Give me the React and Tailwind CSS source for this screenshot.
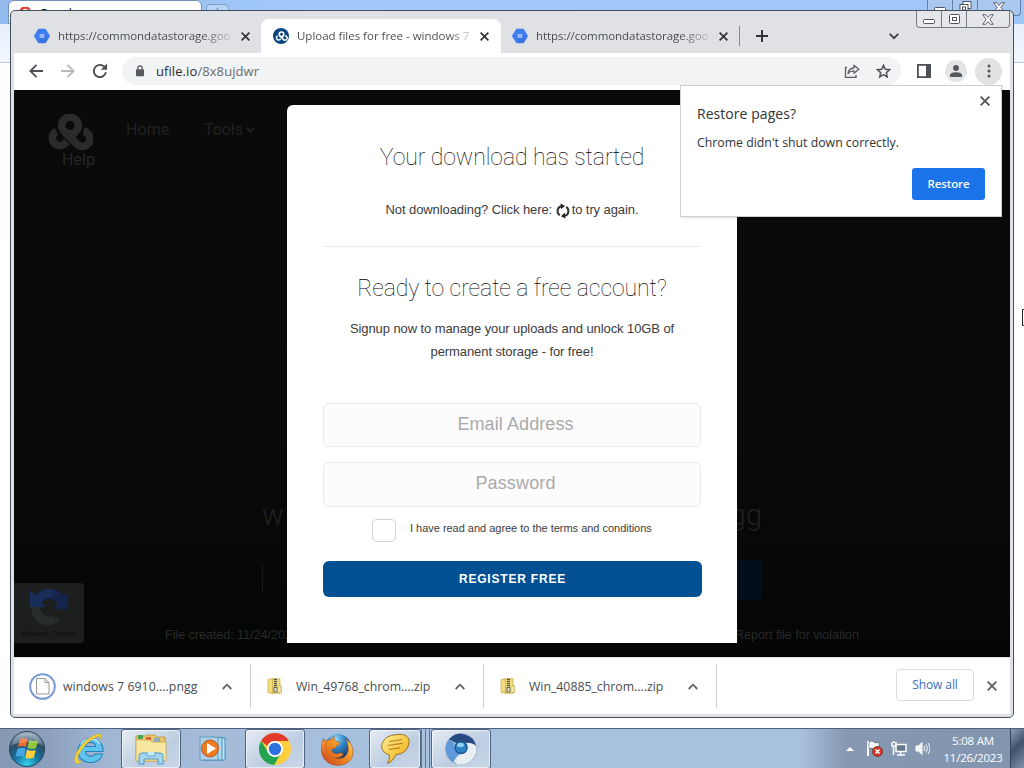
import React from "react";

const ui = "font-['Open_Sans','Noto_Sans',sans-serif]";

function Close({ className = "" }) {
  return (
    <svg className={"block shrink-0 " + className} width="9" height="9" viewBox="0 0 9 9" fill="none" stroke="currentColor" strokeWidth="1.7">
      <path d="M.6.6l7.8 7.8M8.4.6L.6 8.4" />
    </svg>
  );
}

function StorageIcon() {
  return (
    <svg className="block shrink-0" width="16" height="16" viewBox="0 0 16 16">
      <path d="M4.6 1h6.8L15.8 8l-4.400 7H4.600L.2 8z" fill="#3f7ef0" stroke="#3f7ef0" strokeWidth=".6" strokeLinejoin="round" />
      <path d="M10.8 6l4 4-3.400 5H7.600L5.200 10z" fill="#3568d4" opacity=".5" />
      <rect x="5.7" y="6.1" width="4.6" height="3.8" fill="#b9d0ff" />
      <path d="M6 7.2h4M6 8.9h4" stroke="#6b9bf5" strokeWidth=".7" />
    </svg>
  );
}

function Knot({ size, width }) {
  return (
    <svg className="block" width={size} height={(size * 36) / 46} viewBox="0 0 46 36" fill="none" stroke="currentColor" strokeWidth={width}>
      <path d="M9.500 17.300A7.600 7.600 0 1 0 17 30.500l3-3" />
      <path d="M16.500 17L30 30.200A7.600 7.600 0 1 0 36.500 17.300" />
      <circle cx="23" cy="11.500" r="8.300" />
      <path d="M29 17.500l-7 7" />
    </svg>
  );
}

function TabStrip() {
  return (
    <div className="flex h-[42px] items-end pt-2 text-[11.500px] text-[#45484c]">
      <div className="flex h-[34px] w-[247px] items-center pl-5">
        <StorageIcon />
        <span className="ml-2 w-[174px] whitespace-nowrap bg-[linear-gradient(90deg,#45484c_83%,#c8cacd)] bg-clip-text tracking-[-0.06px] text-transparent">https://commondatastorage.goo</span>
        <Close className="ml-[9px] text-[#333]" />
      </div>
      <div className="flex h-[34px] w-[240px] items-center rounded-t-[8px] bg-white pl-3">
        <span className="flex size-4 shrink-0 items-center justify-center rounded-full bg-[#0c4682] text-white"><Knot size={13} width={5.5} /></span>
        <span className="ml-2 w-[172px] whitespace-nowrap bg-[linear-gradient(90deg,#45484c_88%,#ccc)] bg-clip-text tracking-[-0.01px] text-transparent">Upload files for free - windows 7</span>
        <Close className="ml-[11px] text-[#333]" />
      </div>
      <div className="flex h-[34px] w-[238px] items-center pl-[11px]">
        <StorageIcon />
        <span className="ml-2 w-[174px] whitespace-nowrap bg-[linear-gradient(90deg,#45484c_83%,#c8cacd)] bg-clip-text tracking-[-0.06px] text-transparent">https://commondatastorage.goo</span>
        <Close className="ml-[9px] text-[#333]" />
      </div>
      <div className="flex h-[34px] items-center">
        <span className="h-5 w-px bg-[#85878a]" />
        <svg className="ml-4 block" width="12" height="12" viewBox="0 0 12 12" stroke="#333" strokeWidth="2"><path d="M6 0v12M0 6h12" /></svg>
        <svg className="ml-[121px] block" width="10" height="7" viewBox="0 0 10 7" fill="none" stroke="#444" strokeWidth="1.900"><path d="M.7.900L5 5.200 9.300.900" /></svg>
      </div>
    </div>
  );
}

function Toolbar() {
  return (
    <div className="flex h-[37px] items-center bg-white pb-px pl-[15px]">
      <svg className="block" width="14" height="14" viewBox="0 0 14 14" fill="none" stroke="#4d5054" strokeWidth="1.800"><path d="M14 7H1.500M7.500.8L1.300 7l6.200 6.200" /></svg>
      <svg className="ml-[18px] block" width="14" height="14" viewBox="0 0 14 14" fill="none" stroke="#b7b9bb" strokeWidth="1.800"><path d="M0 7h12.500M6.500.8L12.700 7l-6.200 6.200" /></svg>
      <svg className="ml-[17px] block" width="16" height="16" viewBox="0 0 16 16" fill="none" stroke="#4d5054" strokeWidth="1.900"><path d="M13.900 9.200A6.100 6.100 0 1 1 12.300 3.700L14 5.400" /><path d="M15 .6v6.200H8.800z" fill="#4d5054" stroke="none" /></svg>
      <div className="ml-[14px] flex h-7 w-[779px] items-center rounded-full bg-[#f1f3f4] pl-[14px]">
        <svg className="block" width="8" height="12" viewBox="0 0 8 12"><rect y="4.200" width="8" height="7" rx=".8" fill="#55585c" /><path d="M1.800 4.500V3a2.200 2.200 0 0 1 4.400 0v1.500" fill="none" stroke="#55585c" strokeWidth="1.300" /></svg>
        <span className="ml-3 pt-[2px] text-[13px] tracking-[0.08px] text-[#2b2c2e]">ufile.io<span className="text-[#6a6d71]">/8x8ujdwr</span></span>
        <svg className="ml-auto block" width="16" height="14" viewBox="0 0 16 14" fill="none" stroke="#5c5f63" strokeWidth="1.300"><path d="M3 3.500H1.500v9.800h10.500V11" /><path d="M4 9.500c.4-3.500 2.500-5.300 6-5.500V1.200L14.800 5.200l-4.800 4V6.800c-2.800 0-4.500.7-6 2.700z" strokeLinejoin="round" /></svg>
        <svg className="ml-4 mr-[10px] block" width="15" height="14" viewBox="0 0 15 14" fill="none" stroke="#505357" strokeWidth="1.500"><path d="M7.500 1.200l1.700 4.100 4.500.4-3.400 2.900 1 4.400-3.800-2.300L3.700 13l1-4.400L1.300 5.700l4.500-.4z" /></svg>
      </div>
      <svg className="ml-4 block" width="14" height="14" viewBox="0 0 14 14"><rect x=".9" y=".9" width="12.200" height="12.200" fill="none" stroke="#4d5054" strokeWidth="1.800" /><rect x="9" width="5" height="14" fill="#4d5054" /></svg>
      <span className="ml-[14px] flex size-[22px] items-center justify-center rounded-full bg-[#e3e4e6]">
        <svg className="block" width="12" height="12" viewBox="0 0 12 12" fill="#55585c"><circle cx="6" cy="3" r="2.900" /><path d="M0 12V9.800C0 7.900 4 7.200 6 7.200s6 .7 6 2.600V12z" /></svg>
      </span>
      <span className="ml-[8px] flex size-[27px] items-center justify-center rounded-full bg-[#e2e2e2]">
        <svg className="block" width="4" height="14" viewBox="0 0 4 14" fill="#505357"><circle cx="2" cy="2" r="1.500" /><circle cx="2" cy="7" r="1.500" /><circle cx="2" cy="12" r="1.500" /></svg>
      </span>
    </div>
  );
}

function DownloadModal() {
  return (
    <section className="absolute left-[273px] top-[15px] flex h-[538px] w-[450px] flex-col rounded-t-md bg-white px-9 text-center font-['Liberation_Sans',Arial,sans-serif] text-[#3c3c3c]">
      <h1 className="mt-[37px] h-[30px] whitespace-nowrap font-['Roboto',sans-serif] text-[23px] font-thin leading-[32px] tracking-[-0.08px] text-black">Your download has started</h1>
      <p className="mt-7 flex h-5 items-center justify-center whitespace-pre text-[13px] tracking-[-0.09px]">
        Not downloading? Click here:{" "}
        <svg className="mr-0.5 mt-[2px] block" width="14" height="16" viewBox="0 0 14 16" fill="none" stroke="#333" strokeWidth="2"><path d="M3.900 12.200A5 5 0 0 1 5 3.200M10.100 3.800A5 5 0 0 1 9 12.800" /><path d="M4.500.500L9 2.800 5.200 6.200zM9.500 15.500L5 13.200 8.800 9.800z" fill="#222" stroke="none" /></svg>
        to try again.
      </p>
      <div className="mt-[26px] h-px bg-[#e9e9e9]" />
      <h2 className="mt-[26px] h-[30px] whitespace-nowrap font-['Roboto',sans-serif] text-[23px] font-thin leading-[32px] tracking-[-0.08px] text-black">Ready to create a free account?</h2>
      <p className="mt-[14px] text-[13px] leading-[23px] tracking-[-0.09px]">Signup now to manage your uploads and unlock 10GB of<br />permanent storage - for free!</p>
      <div className="mt-[40px] h-11 shrink-0 rounded-md border border-[#ebebeb] bg-[#fcfcfc] pl-[7px] text-[18px] leading-[40px] tracking-[0.08px] text-[#aaa]">Email Address</div>
      <div className="mt-[15px] h-[45px] shrink-0 rounded-md border border-[#ebebeb] bg-[#fcfcfc] pl-[7px] text-[18px] leading-[40px] tracking-[0.15px] text-[#aaa]">Password</div>
      <div className="mt-3 flex h-6 pl-[49px]">
        <span className="h-[23px] w-6 rounded-[5px] border border-[#d2d2d2] bg-white" />
        <span className="ml-[14px] text-[11px] leading-[19px] tracking-[-0.02px]">I have read and agree to the terms and conditions</span>
      </div>
      <button className="mt-[18px] -mr-px h-9 shrink-0 rounded-[6px] bg-[#025094] text-[12px] font-bold tracking-[0.8px] text-white">REGISTER FREE</button>
    </section>
  );
}

function RestoreBubble() {
  return (
    <section className="absolute left-[669px] top-[74px] flex h-[132px] w-[322px] flex-col border border-[#cfcfcf] bg-white pl-4 pr-4 pt-[17px] text-[#303236] shadow-[1px_1px_2px_rgba(0,0,0,0.15)]">
      <Close className="absolute right-[11px] top-[10px] size-[10px] text-[#555]" />
      <h3 className="h-[22px] whitespace-nowrap text-[14px] leading-[22px] tracking-[0.05px]">Restore pages?</h3>
      <p className="mt-2 h-5 whitespace-nowrap text-[12.300px] leading-5">Chrome didn't shut down correctly.</p>
      <button className="mt-[15px] h-8 w-[73px] self-end rounded-[3px] bg-[#1a73e8] text-[11.500px] font-semibold tracking-[-0.1px] text-white">Restore</button>
    </section>
  );
}

function WebPage() {
  return (
    <main className="relative flex h-[567px] flex-col overflow-hidden bg-[linear-gradient(180deg,#0a0a0a_0%,#080a09_70%,#040505_100%)] font-['Roboto',sans-serif] text-[#212121]">
      <nav className="flex h-[90px] pl-[33px] pt-6">
        <div className="w-[79px] text-[#2b2b2b]">
          <Knot size={46} width={7.5} />
          <div className="pl-[15px] pt-px text-[16px] leading-[18px] tracking-[0.1px] text-[#272727]">Help</div>
        </div>
        <div className="w-[78px] text-[16px] leading-[31px] tracking-[0.1px]">Home</div>
        <div className="flex h-[31px] items-center gap-[3px] text-[16px] tracking-[-0.1px]">Tools<svg width="9" height="6" viewBox="0 0 9 6" fill="none" stroke="currentColor" strokeWidth="1.800"><path d="M1 1l3.500 3.500L8 1" /></svg></div>
      </nav>
      <div className="mx-auto mt-auto mb-[27px] flex w-[500px] justify-between text-[29px] font-light leading-[36px] text-[#202121]">
        <span>w</span><span>gg</span>
      </div>
      <div className="mx-auto flex h-10 w-[500px] justify-between">
        <span className="mt-1 h-7 w-px bg-[#171818]" /><span className="w-[120px] rounded bg-[#000d1a]" />
      </div>
      <div className="flex h-[57px] items-end">
        <div className="mb-[14px] flex h-[60px] w-[70px] flex-col items-center rounded-r bg-[#1d1e1e] pt-1.5">
          <svg width="40" height="38" viewBox="0 0 40 38"><path d="M2 17A18 17 0 0 1 35 7l4-4v17H24l5-5c-5-8-16-7-18 3z" fill="#14244c" /><path d="M2 17h9c0 7 6 12 13 10l7 5C16 42 2 33 2 17z" fill="#292c2d" /><path d="M1 18V1l6 6c5-6 10-7 16-7v9c-6-1-9 2-10 5l4 4z" fill="#192d59" /></svg>
          <span className="text-[8px] leading-[13px] text-[#0c0d0d]">Privacy - Terms</span>
        </div>
        <div className="mb-[13px] ml-[81px] flex w-[694px] justify-between font-['Liberation_Sans',Arial,sans-serif] text-[12.600px] leading-[18px] tracking-[-0.05px] text-[#292929]">
          <span>File created: 11/24/2023</span><span>Report file for violation</span>
        </div>
      </div>
      <DownloadModal />
    </main>
  );
}

function ZipIcon() {
  return (
    <svg className="block shrink-0" width="15" height="16" viewBox="0 0 15 16">
      <path d="M1 1.500l5-1v15l-5-1z" fill="#f1dd7d" stroke="#c8a943" strokeWidth=".7" />
      <path d="M5.500.8H13v14.500H5.500z" fill="#efdc78" stroke="#c8a943" strokeWidth=".7" />
      <path d="M12 8h2.300v6.500H12" fill="#f6ecaa" stroke="#b9983a" strokeWidth=".7" />
      <path d="M8.500.8v9" stroke="#555548" strokeWidth="3" strokeDasharray="1.200 .8" />
      <rect x="7" y="9.300" width="3" height="4.700" fill="#ddd" stroke="#555548" strokeWidth=".8" />
    </svg>
  );
}

function Download({ name, first }) {
  return (
    <div className={"flex h-11 items-center border-r border-[#ccc] " + (first ? "w-[237px] pl-[15px]" : "w-[233px] pl-4")}>
      {first ? (
        <svg className="block shrink-0" width="27" height="27" viewBox="0 0 27 27"><circle cx="13.500" cy="13.500" r="12.300" fill="#fff" stroke="#7799d3" strokeWidth="2" /><path d="M7.500 5.500h8.500l4 4v11.500H7.500z" fill="#fcfcfc" stroke="#999" /><path d="M16 5.500v4h4" fill="none" stroke="#999" /></svg>
      ) : (
        <ZipIcon />
      )}
      <span className={"whitespace-nowrap pt-[3px] text-[12.300px] text-[#4a4c50] " + (first ? "ml-[7px] w-[159px] tracking-[0.05px]" : "ml-[14px] w-[159px] tracking-[-0.01px]")}>{name}</span>
      <svg className="block" width="10" height="7" viewBox="0 0 10 7" fill="none" stroke="#606368" strokeWidth="1.800"><path d="M.7 6L5 1.700 9.300 6" /></svg>
    </div>
  );
}

function Shelf() {
  return (
    <footer className="flex h-[57px] items-center border-t border-[#e5e5e5] bg-white">
      <Download first name="windows 7 6910....pngg" />
      <Download name="Win_49768_chrom....zip" />
      <Download name="Win_40885_chrom....zip" />
      <button className="ml-auto mb-[2px] h-8 w-[78px] rounded border border-[#dadce0] text-[12px] font-medium tracking-[-0.1px] text-[#3b6ebc]">Show all</button>
      <Close className="ml-[13px] mr-[13px] mb-px size-[10px] text-[#606060]" />
    </footer>
  );
}

function Caption({ back }) {
  return (
    <div className={"absolute flex h-[17px] divide-x rounded-b-[4px] border border-t-0 " + (back ? "left-[927px] -top-px w-[94px] divide-[#647fa6] border-[#647fa6] bg-[#a8c8ef]" : "right-[3px] top-0 w-[94px] divide-[#777b83] border-[#777b83] bg-[#e4e6e9]")}>
      <div className="flex w-[25px] items-end justify-center pb-[3px]"><svg width="12" height="5" viewBox="0 0 12 5"><rect x=".5" y=".5" width="11" height="4" rx="1" fill="#fff" stroke="#50545e" /></svg></div>
      <div className="flex w-[25px] items-center justify-center">
        <svg width="13" height="12" viewBox="0 0 13 12" fill="#fff" stroke="#50545e">
          {back ? <><rect x="4" y=".5" width="8" height="7" /><rect x="1" y="3.500" width="8" height="8" /><rect x="3.500" y="6" width="3" height="3" /></> : <><rect x="1.500" y="1.500" width="10" height="9" rx="1" /><rect x="4.500" y="4.500" width="4" height="3" /></>}
        </svg>
      </div>
      <div className="flex flex-1 items-center justify-center"><svg width="12" height="11" viewBox="0 0 12 11"><path d="M.7.7h3L6 3.500 8.300.7h3L7.800 5.500l3.500 4.800h-3L6 7.500 3.700 10.300h-3l3.500-4.800z" fill="#fff" stroke="#50545e" strokeWidth=".9" /></svg></div>
    </div>
  );
}

function BackWindow() {
  return (
    <div className="flex h-[728px] flex-col bg-white">
      <div className="flex h-6 bg-[linear-gradient(90deg,#93bbee,#a1c8f8_30%,#9fc6f6)] pl-2">
        <div className="flex h-6 w-[194px] gap-2 rounded-t-md border border-[#7291b9] bg-white pl-2.5 pt-[6px]">
          <svg width="12" height="12" viewBox="0 0 12 12" fill="none" stroke="#e23d35" strokeWidth="2.500"><path d="M10.500 3A5 5 0 1 0 11 7H6" /></svg>
          <span className="font-['Open_Sans',sans-serif] text-[12px] leading-[13px] text-black">Google</span>
        </div>
        <span className="ml-1 mt-1 flex h-4 w-[23px] justify-center rounded border border-[#7d9fcb] bg-[#b8d4f6] text-[12px] leading-[12px] text-[#50617b]">+</span>
      </div>
      <div className="h-[39px] border-b border-[#b7c8dd] bg-[linear-gradient(180deg,#e5effb,#f3f7fc)]" />
    </div>
  );
}

function TaskButton({ children, className }) {
  return <div className={"flex h-10 items-center justify-center rounded-[3px] border border-[#50627c] bg-[linear-gradient(145deg,#e5ebf3,#bdcde1_60%,#c9d7e8)] shadow-[inset_0_0_0_1px_rgba(255,255,255,0.6)] " + className}>{children}</div>;
}

function StartOrb() {
  return (
    <svg width="38" height="38" viewBox="0 0 38 38">
      <defs><radialGradient id="orb" cx=".5" cy=".95" r=".95"><stop offset="0" stopColor="#35d6ef" /><stop offset=".4" stopColor="#14719d" /><stop offset=".7" stopColor="#2b4e66" /><stop offset="1" stopColor="#a9bdca" /></radialGradient></defs>
      <circle cx="19" cy="19" r="17.500" fill="url(#orb)" stroke="#28415b" />
      <path d="M12 9q4-2 7.500.2L18 17q-4.300-2.200-8.200 0z" fill="#ee6a2c" />
      <path d="M21 10q4 2.200 9 .2l-2 8q-4.500 1.800-8.500-.4z" fill="#91c63f" />
      <path d="M9.400 19q4-2.200 8.200-.2L16 27q-4.300-2.200-8.500.2z" fill="#47a6e5" />
      <path d="M19 19.600q4.300 2.200 8.800.4l-2 7.800q-4.500 1.800-8.500-.4z" fill="#fbd03a" />
      <path d="M4 15A15.500 15.500 0 0 1 34 15Q19 9 4 15" fill="#fff" opacity=".22" />
    </svg>
  );
}

function Explorer() {
  return (
    <svg width="34" height="32" viewBox="0 0 34 32">
      <path d="M2 3h9l2-1h8l1 2h9v24H2z" fill="#e9c965" stroke="#b9943c" strokeWidth=".8" />
      <path d="M4 2h5v4H4z" fill="#47a54f" /><path d="M12 4h5v4h-5z" fill="#d75c3d" /><path d="M20 5h6v4h-6z" fill="#85aaca" />
      <path d="M2 7h14l2 2h14v19H2z" fill="#f7e7a0" stroke="#c9a94f" strokeWidth=".8" />
      <path d="M5 31V23q0-3 3-3h18q3 0 3 3v8h-5v-5H10v5z" fill="#a6d6f2" stroke="#4e96c5" />
      <path d="M13 19v4h8v-4" fill="#c5eafa" stroke="#65a9d1" />
    </svg>
  );
}

function Firefox() {
  return (
    <svg width="34" height="34" viewBox="0 0 34 34">
      <defs>
        <radialGradient id="globe" cx=".4" cy=".2" r=".8"><stop offset="0" stopColor="#9bdcf6" /><stop offset=".45" stopColor="#2f86c4" /><stop offset="1" stopColor="#12305f" /></radialGradient>
        <linearGradient id="tail" x1="1" y1="0" x2="0" y2="1"><stop offset="0" stopColor="#fde26a" /><stop offset=".4" stopColor="#f39a2b" /><stop offset="1" stopColor="#c93a17" /></linearGradient>
      </defs>
      <circle cx="18" cy="15" r="13" fill="url(#globe)" />
      <path d="M3.500 6.500q1 2 2.500 2.500 3-2 6-1.500 0-2 2-3.500 0 3 1.500 5 2 1 4.500 1.500-.5 2.500-4 3.500.5 1.500-1 2.500-3-.5-3.500 1.500 1 4 6 4 3-2 6 0-2.500 4-8 4 8 2 11.500-4 3-6-1-15 7 5 7 13 0 12-14.500 13.500Q4 33 1.500 20 1 12 3.500 6.500z" fill="url(#tail)" stroke="#a8401a" strokeWidth=".5" />
      <path d="M5 10q-3 5 0 11-4-5-2-12z" fill="#f79a3c" />
    </svg>
  );
}

function Taskbar() {
  return (
    <div className="flex h-10 border-t border-[#4d6280] bg-[linear-gradient(90deg,#8599b3_0px,#8b9fba_45px,#a1b8d5_110px,#a8c1df_400px,#a8c1df_800px,#8799b2_845px,#8295ae)]">
      <div className="flex w-[121px] items-center pl-[8px]">
        <StartOrb />
        <svg className="ml-[26px]" width="34" height="34" viewBox="0 0 34 34">
          <path fillRule="evenodd" d="M31 19.500H13.500c.5 5.500 8 6 10 2.500h7C28 34 6 34 6 18.500 6 3 32 2 31 19.500zM13.500 14.500H23.500c-.5-5.500-9-5.500-10 0z" fill="#5fc3ee" stroke="#2383bb" strokeWidth="1.100" />
          <path d="M9 12C12 6 24 5 28 12" fill="none" stroke="#b5e6fa" strokeWidth="1.500" />
          <path d="M4 31C-2 25 14 4 26.500 2c3.500-.2 3.300 3 2.200 5.500.2-3-1-3.700-3.500-2.800C16 8 4 22 6 28c.5 1.500 2 1.500 4 .5-2.500 2.300-4.500 3.800-6 2.500z" fill="#f8d433" stroke="#c7a32b" strokeWidth=".5" />
        </svg>
      </div>
      <TaskButton className="w-[60px]"><Explorer /></TaskButton>
      <div className="flex w-[64px] items-center justify-center"><svg width="28" height="26" viewBox="0 0 28 26"><path d="M7 2h19v22H7z" fill="#c3e5f6" stroke="#428eb7" /><path d="M4 1.500h19v22.500H4z" fill="#b2dbf2" stroke="#428eb7" /><path d="M1 1h18v23H1z" fill="#afd2e8" stroke="#5d9abe" /><circle cx="11" cy="12.500" r="8.500" fill="#ed7b24" stroke="#bc5720" /><path d="M8 7l9 5.500L8 18z" fill="#fff" /></svg></div>
      <TaskButton className="w-[60px]">
        <svg width="34" height="34" viewBox="0 0 34 34"><circle cx="17" cy="17" r="16" fill="#ffce3d" /><path d="M3.100 9A16 16 0 0 1 30.900 9H17a8 8 0 0 0-7.500 5z" fill="#e33b2e" /><path d="M3.100 9A16 16 0 0 0 16 33l7-11.500a8 8 0 0 1-13.300-2z" fill="#22a352" /><circle cx="17" cy="17" r="8" fill="#fff" /><circle cx="17" cy="17" r="6.200" fill="#2e70df" /></svg>
      </TaskButton>
      <div className="flex w-16 items-center justify-center"><Firefox /></div>
      <TaskButton className="w-[52px]">
        <svg width="31" height="32" viewBox="0 0 31 32">
          <defs><linearGradient id="bubble" x1="0" y1="0" x2="1" y2="1"><stop offset="0" stopColor="#fff09a" /><stop offset=".6" stopColor="#f7c53d" /><stop offset="1" stopColor="#e69d20" /></linearGradient></defs>
          <path d="M17 1.500C25 .5 30 4 29 10s-5 11-13 11.500c-2 4.500-4.500 7.500-8.500 9 1.800-3 2.500-6.500 1.500-9C3.500 20.500 1 16 2 11.500 3.500 5 9 2.300 17 1.500z" fill="url(#bubble)" stroke="#9c701f" />
          <path d="M9 8.500l13-2M7.500 12.500l15-2.200M9 16.500l11-1.600" stroke="#b57f26" strokeWidth="1.200" />
        </svg>
      </TaskButton>
      <div className="flex w-[10px] gap-[3px]"><span className="w-px bg-[#60748f]" /><span className="w-px bg-[#60748f]" /><span className="w-px bg-[#60748f]" /></div>
      <TaskButton className="w-[60px]">
        <svg width="34" height="34" viewBox="0 0 34 34">
          <circle cx="17" cy="17" r="15.500" fill="#dde7ee" stroke="#7890ad" strokeWidth=".8" />
          <path d="M5 7.500A15.500 15.500 0 0 1 32 14q-5-4-9-3-6-3-11 0z" fill="#264a80" />
          <path d="M5 7.500C-1 15 2 26 9.500 30.500q2-6 6.500-8Q9 20 10.500 11z" fill="#6098dc" />
          <path d="M12.500 32A15.500 15.500 0 0 0 32 14q-3-3-8-2 3 9-7 11-4 3-4.500 9z" fill="#e8eff2" />
          <circle cx="17" cy="15.500" r="6.700" fill="#17508f" />
          <circle cx="17" cy="15.500" r="5.300" fill="#2d83c4" />
          <ellipse cx="16.500" cy="13" rx="3.500" ry="2.200" fill="#8dd0f0" />
        </svg>
      </TaskButton>
      <div className="ml-auto flex items-center text-[11.500px] leading-[17px] text-white">
        <svg className="mr-px" width="8" height="5" viewBox="0 0 8 5"><path d="M0 5l4-4 4 4z" fill="#fff" /></svg>
        <svg className="ml-[11px]" width="17" height="17" viewBox="0 0 17 17"><path d="M2 1v15" stroke="#fff" strokeWidth="2" /><path d="M3 2q3-2 5 0t5 0v7q-3 2-5 0T3 9z" fill="#f6f9fc" stroke="#4d596b" strokeWidth=".6" /><circle cx="11.500" cy="11.500" r="5" fill="#d4382c" stroke="#84362f" /><path d="M9.500 9.500l4 4m0-4l-4 4" stroke="#fff" strokeWidth="1.500" /></svg>
        <svg className="ml-2" width="16" height="15" viewBox="0 0 16 15" fill="none" stroke="#fff"><rect x="5" y="3.500" width="10" height="7" fill="#64788e" strokeWidth="1.500" /><path d="M9.500 11v3M6 14h8M2.500 6v8M1 1v4h4V1M3 0v2" strokeWidth="1.500" /></svg>
        <svg className="ml-2" width="15" height="15" viewBox="0 0 15 15" fill="none" stroke="#fff"><path d="M1 5h2.500L7 1.500v12L3.500 10H1z" fill="#eef3f7" /><path d="M9 5q1.500 2.500 0 5M11 3.500q3 4 0 8M13 2q4 5.500 0 11" /></svg>
        <div className="ml-[11px] mr-px w-[64px] whitespace-nowrap text-center tracking-[-0.200px]">5:08 AM<br />11/26/2023</div>
        <div className="ml-1 h-10 w-[14px] border-l border-[#34465e] bg-[linear-gradient(135deg,#8c9fb7,#40536b_45%,#8194aa)]" />
      </div>
    </div>
  );
}

export default function App() {
  return (
    <div className={"relative h-[768px] w-[1024px] overflow-hidden bg-white " + ui}>
      <BackWindow />
      <Caption back />
      <Taskbar />
      <div className="absolute left-[10px] top-[10px] h-[708px] w-[1004px] rounded-[5px] border border-[#45505e] bg-[#dfe1e5]">
        <div className="mx-[3px] flex flex-col">
          <TabStrip />
          <Toolbar />
          <WebPage />
          <Shelf />
        </div>
        <Caption />
        <RestoreBubble />
      </div>
      <svg className="absolute left-[1021px] top-[308px]" width="3" height="19" viewBox="0 0 3 19"><path d="M3 1.500H1.500v16H3" fill="#fff" stroke="#222" /></svg>
    </div>
  );
}
